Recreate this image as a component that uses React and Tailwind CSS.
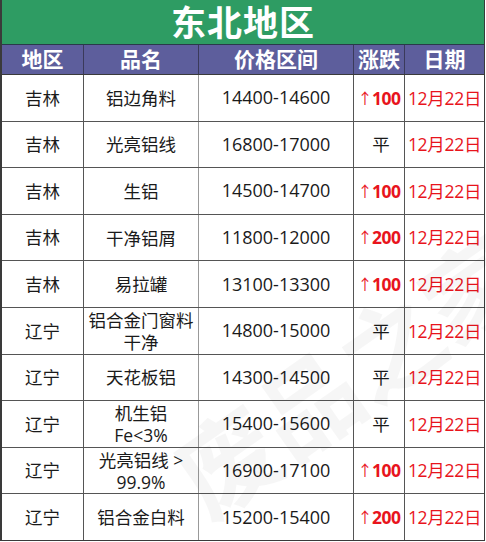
import React from "react";

const rows = [
  ["吉林", ["铝边角料"], "14400-14600", "↑100", "12月22日"],
  ["吉林", ["光亮铝线"], "16800-17000", "平", "12月22日"],
  ["吉林", ["生铝"], "14500-14700", "↑100", "12月22日"],
  ["吉林", ["干净铝屑"], "11800-12000", "↑200", "12月22日"],
  ["吉林", ["易拉罐"], "13100-13300", "↑100", "12月22日"],
  ["辽宁", ["铝合金门窗料", "干净"], "14800-15000", "平", "12月22日"],
  ["辽宁", ["天花板铝"], "14300-14500", "平", "12月22日"],
  ["辽宁", ["机生铝", "Fe<3%"], "15400-15600", "平", "12月22日"],
  ["辽宁", ["光亮铝线 >", "99.9%"], "16900-17100", "↑100", "12月22日"],
  ["辽宁", ["铝合金白料"], "15200-15400", "↑200", "12月22日"],
];

const cols = "grid grid-cols-[82px_115px_155px_51px_1fr]";
const font = { fontFamily: '"Open Sans", "Noto Sans CJK SC", sans-serif' };

export default function App() {
  return (
    <div className="relative w-[486px] h-[542px] bg-white overflow-hidden" style={font}>
      <div className="flex flex-col h-[541px] w-[485px] border-l-2 border-r border-b border-[#3a3a3a]">
        <div className="h-[45px] bg-[#2e9c63] flex items-center justify-center border-b border-[#2a3a4a]">
          <span className="text-white font-bold text-[35px] leading-none tracking-[1px]">东北地区</span>
        </div>
        <div className={`${cols} h-[30px] bg-[#5d5e9c] border-b border-[#3a3a3a] text-white font-bold text-[21px] leading-none`}>
          {["地区", "品名", "价格区间", "涨跌", "日期"].map((h, i) => (
            <div key={i} className={`flex items-center justify-center ${i < 4 ? "border-r border-[#3a3a5a]" : ""}`}>{h}</div>
          ))}
        </div>
        <div className="flex-1 flex flex-col">
          {rows.map((r, i) => (
            <div key={i} className={`${cols} flex-1 ${i < rows.length - 1 ? "border-b border-[#555]" : ""} text-[17.5px] text-[#1a1a1a]`}>
              <div className="flex items-center justify-center border-r border-[#555]">{r[0]}</div>
              <div className="flex flex-col items-center justify-center border-r border-[#999] leading-[22px] text-center">
                {r[1].map((t, j) => <div key={j}>{t}</div>)}
              </div>
              <div className="flex items-center justify-center border-r border-[#555] text-[18px]">{r[2]}</div>
              <div className={`flex items-center justify-center border-r border-[#555] ${r[3] === "平" ? "" : "text-[#e8141c] font-bold"}`}>
                {r[3] === "平" ? <span className="pl-[4px]">平</span> : (
                  <span className="flex items-center tracking-[-0.5px]"><span className="font-normal text-[15px]">↑</span>{r[3].slice(1)}</span>
                )}
              </div>
              <div className="flex items-center justify-center text-[#e8141c] tracking-[-0.3px]">{r[4]}</div>
            </div>
          ))}
        </div>
      </div>
      <div className="absolute left-[150px] top-[300px] text-[100px] text-black/[0.035] font-bold -rotate-[35deg] pointer-events-none whitespace-nowrap" style={font}>废品之家</div>
    </div>
  );
}
